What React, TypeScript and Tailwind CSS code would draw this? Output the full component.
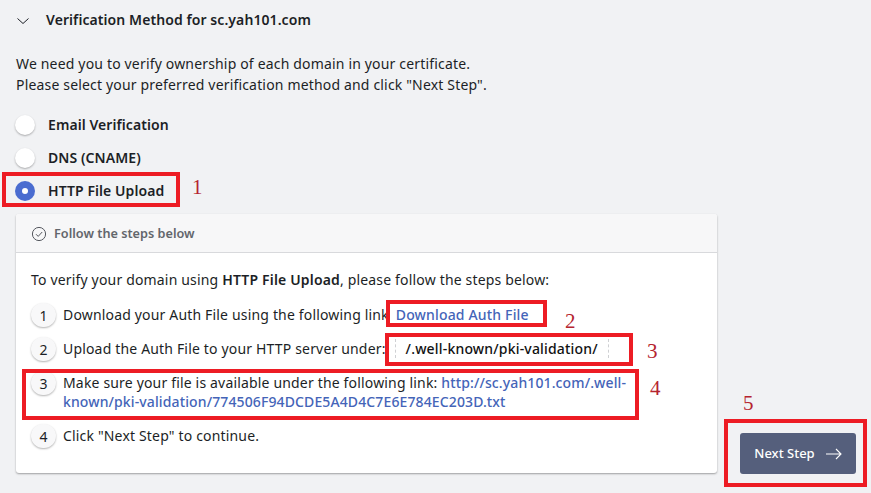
import type { ReactNode } from 'react';

const font = "font-['Noto_Sans','Open_Sans',sans-serif]";

function Radio({ label, checked }: { label: string; checked?: boolean }) {
  return (
    <div className="flex h-[33px] items-center">
      {checked ? (
        <span className="flex h-5 w-5 items-center justify-center rounded-full bg-[#4a6cd0]">
          <span className="h-[6px] w-[6px] rounded-full bg-white" />
        </span>
      ) : (
        <span className="h-5 w-5 rounded-full bg-white shadow-[0_1px_2px_rgba(0,0,0,0.3)]" />
      )}
      <span className="ml-[13px] text-[14px] font-semibold tracking-[0.07px] text-[#1c1f26]">{label}</span>
    </div>
  );
}

function Step({ n, children }: { n: number; children: ReactNode }) {
  return (
    <div className="flex items-start">
      <span className="mr-[7px] flex h-[24px] w-[25px] shrink-0 items-center justify-center rounded-full bg-[#f8f8f9] text-[14px] text-[#1c1f26] shadow-[0_1px_2px_rgba(0,0,0,0.3)]">
        {n}
      </span>
      <div className="w-[640px] text-[14px] leading-[19px] tracking-[0.17px] text-[#1c1f26]">{children}</div>
    </div>
  );
}

// red annotation frames drawn on top of the screenshot
function Mark({ className }: { className: string }) {
  return <div className={`pointer-events-none absolute border-[4px] border-[#ed1c24] ${className}`} />;
}

function Note({ n, className }: { n: number; className: string }) {
  return <span className={`absolute font-['Liberation_Serif',serif] text-[21px] leading-none text-[#b5242f] ${className}`}>{n}</span>;
}

export default function App() {
  return (
    <div className={`relative h-[493px] w-[871px] overflow-hidden bg-[#f1f2f4] ${font}`}>
      <div className="flex h-[38px] items-center pl-[17px]">
        <svg width="12" height="6" viewBox="0 0 12 6" fill="none" stroke="#1c1f26" strokeWidth="1" className="mt-[4px]">
          <path d="M0.5 0.5L6 5.5L11.5 0.5" />
        </svg>
        <span className="ml-[17px] text-[14px] font-semibold tracking-[0.08px] text-[#1c1f26]">Verification Method for sc.yah101.com</span>
      </div>

      <p className="mt-[15px] pl-[16px] text-[14px] leading-[21px] tracking-[0.17px] text-[#1c1f26]">
        We need you to verify ownership of each domain in your certificate.
        <br />
        Please select your preferred verification method and click "Next Step".
      </p>

      <div className="mt-[13px] pl-[15px]">
        <Radio label="Email Verification" />
        <Radio label="DNS (CNAME)" />
        <Radio label="HTTP File Upload" checked />
      </div>

      <div className="flex items-end">
        <div className="mt-[7px] ml-[16px] h-[259px] w-[701px] overflow-hidden rounded-[3px] bg-white shadow-[0_1px_2px_rgba(0,0,0,0.35)]">
          <div className="flex h-[39px] items-center border-b border-[#d8d9dc] bg-[#f7f7f8] pl-[15px] pt-[2px]">
            <svg width="16" height="16" viewBox="0 0 16 16" fill="none" stroke="#55585f" strokeWidth="1">
              <circle cx="8" cy="8" r="6.6" />
              <path d="M5 8.2l2.2 2.2L11.2 6" />
            </svg>
            <span className="ml-[7px] text-[12.7px] font-semibold text-[#63666c]">Follow the steps below</span>
          </div>
          <div className="px-[15px] pt-[17px]">
            <p className="text-[14px] leading-[20px] tracking-[0.17px] text-[#1c1f26]">
              To verify your domain using <b className="font-semibold">HTTP File Upload</b>, please follow the steps below:
            </p>
            <div className="mt-[13px] flex flex-col gap-[10px]">
              <Step n={1}>
                <div className="flex h-[24px] items-center pb-[1px]">
                  Download your Auth File using the following link
                  <a className="ml-[7px] font-medium text-[#4464b8]">Download Auth File</a>
                </div>
              </Step>
              <Step n={2}>
                <div className="flex h-[24px] items-center pb-[1px]">
                  Upload the Auth File to your HTTP server under:
                  <span className="ml-[9px] border-x border-dashed border-[#cfd0d3] px-[10px] font-medium tracking-[0.18px] text-[#111]">/.well-known/pki-validation/</span>
                </div>
              </Step>
              <Step n={3}>
                <div className="min-h-[43px] pt-[2px]">
                  Make sure your file is available under the following link:{' '}
                  <a className="font-medium tracking-[0.12px] text-[#4464b8]">http://sc.yah101.com/.well-known/pki-validation/774506F94DCDE5A4D4C7E6E784EC203D.txt</a>
                </div>
              </Step>
              <Step n={4}>
                <div className="flex h-[24px] items-center pb-[1px]">Click "Next Step" to continue.</div>
              </Step>
            </div>
          </div>
        </div>

        <button className="mb-[-1px] ml-[23px] flex h-[41px] w-[116px] items-center justify-center rounded-[3px] bg-[#555f7c] text-[13px] font-medium text-white">
          Next Step
          <svg width="16" height="12" viewBox="0 0 16 12" fill="none" stroke="white" strokeWidth="1.1" className="ml-[11px]">
            <path d="M0 6H15M10 1l5 5-5 5" />
          </svg>
        </button>
      </div>

      <Mark className="left-[2px] top-[172px] h-[35px] w-[178px]" />
      <Mark className="left-[386px] top-[300px] h-[27px] w-[161px]" />
      <Mark className="left-[385px] top-[333px] h-[33px] w-[248px]" />
      <Mark className="left-[22px] top-[369px] h-[51px] w-[617px]" />
      <Mark className="left-[724px] top-[419px] h-[68px] w-[143px]" />

      <Note n={1} className="left-[192px] top-[177px]" />
      <Note n={2} className="left-[565px] top-[311px]" />
      <Note n={3} className="left-[647px] top-[341px]" />
      <Note n={4} className="left-[650px] top-[378px]" />
      <Note n={5} className="left-[743px] top-[393px]" />
    </div>
  );
}
